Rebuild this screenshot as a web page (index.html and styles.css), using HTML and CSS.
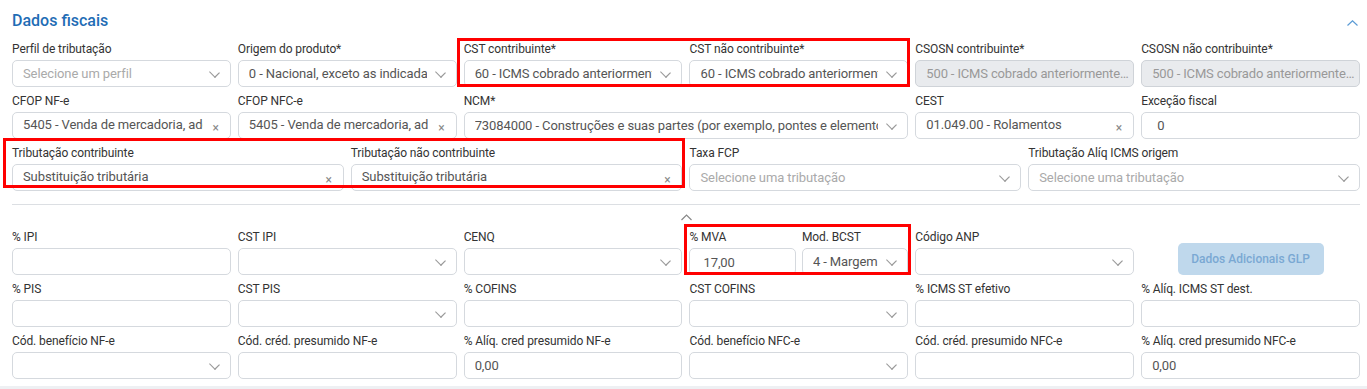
FILE: index.html
```html
<!DOCTYPE html>
<html lang="pt-BR">
<head>
    <meta charset="UTF-8">
    <title>Dados fiscais</title>
    <link rel="stylesheet" href="styles.css">
</head>
<body>

<div class="card">
    <div class="card-header">
        <h2 class="card-title">Dados fiscais</h2>
        <svg class="toggle" width="11" height="6" viewBox="0 0 11 6"><path d="M0.5 5.5 L5.5 0.8 L10.5 5.5" fill="none" stroke="#5b9bd5" stroke-width="1.2"/></svg>
    </div>

    <div class="grid">
        <div class="field span-2">
            <label>Perfil de tributação</label>
            <div class="control select"><span class="value placeholder">Selecione um perfil</span><i class="chev"></i></div>
        </div>
        <div class="field span-2">
            <label>Origem do produto*</label>
            <div class="control select"><span class="value">0 - Nacional, exceto as indicadas nos códigos 3, 4, 5 e 8</span><i class="chev"></i></div>
        </div>
        <div class="group group-cst span-4">
            <div class="field">
                <label>CST contribuinte*</label>
                <div class="control select"><span class="value">60 - ICMS cobrado anteriormente por substituição tributária</span><i class="chev"></i></div>
            </div>
            <div class="field">
                <label>CST não contribuinte*</label>
                <div class="control select"><span class="value">60 - ICMS cobrado anteriormente por substituição tributária</span><i class="chev"></i></div>
            </div>
        </div>
        <div class="field span-2">
            <label>CSOSN contribuinte*</label>
            <div class="control disabled"><span class="value ellipsis">500 - ICMS cobrado anteriormente por substituição</span></div>
        </div>
        <div class="field span-2">
            <label>CSOSN não contribuinte*</label>
            <div class="control disabled"><span class="value ellipsis">500 - ICMS cobrado anteriormente por substituição</span></div>
        </div>

        <div class="field span-2">
            <label>CFOP NF-e</label>
            <div class="control select"><span class="value raised">5405 - Venda de mercadoria, adquirida</span><i class="clear">×</i></div>
        </div>
        <div class="field span-2">
            <label>CFOP NFC-e</label>
            <div class="control select"><span class="value raised">5405 - Venda de mercadoria, adquirida</span><i class="clear">×</i></div>
        </div>
        <div class="field span-4">
            <label>NCM*</label>
            <div class="control select"><span class="value">73084000 - Construções e suas partes (por exemplo, pontes e elementos de pontes)</span><i class="chev"></i></div>
        </div>
        <div class="field span-2">
            <label>CEST</label>
            <div class="control select"><span class="value raised">01.049.00 - Rolamentos</span><i class="clear">×</i></div>
        </div>
        <div class="field span-2">
            <label>Exceção fiscal</label>
            <div class="control input wide-pad"><span class="value">0</span></div>
        </div>

        <div class="group group-trib span-6">
            <div class="field">
                <label>Tributação contribuinte</label>
                <div class="control select"><span class="value lifted">Substituição tributária</span><i class="clear">×</i></div>
            </div>
            <div class="field">
                <label>Tributação não contribuinte</label>
                <div class="control select"><span class="value lifted">Substituição tributária</span><i class="clear">×</i></div>
            </div>
        </div>
        <div class="field span-3">
            <label>Taxa FCP</label>
            <div class="control select"><span class="value placeholder">Selecione uma tributação</span><i class="chev"></i></div>
        </div>
        <div class="field span-3">
            <label>Tributação Alíq ICMS origem</label>
            <div class="control select"><span class="value placeholder">Selecione uma tributação</span><i class="chev"></i></div>
        </div>
    </div>

    <hr class="divider">
    <div class="collapse">
        <svg width="11" height="7" viewBox="0 0 11 7"><path d="M0.5 6 L5.5 1 L10.5 6" fill="none" stroke="#888" stroke-width="1.2"/></svg>
    </div>

    <div class="grid">
        <div class="field span-2">
            <label>% IPI</label>
            <div class="control input"><span class="value"></span></div>
        </div>
        <div class="field span-2">
            <label>CST IPI</label>
            <div class="control select"><span class="value"></span><i class="chev"></i></div>
        </div>
        <div class="field span-2">
            <label>CENQ</label>
            <div class="control select"><span class="value"></span><i class="chev"></i></div>
        </div>
        <div class="group group-mva span-2">
            <div class="field">
                <label>% MVA</label>
                <div class="control input"><span class="value mva">17,00</span></div>
            </div>
            <div class="field">
                <label>Mod. BCST</label>
                <div class="control select"><span class="value">4 - Margem Valor Agregado (%)</span><i class="chev"></i></div>
            </div>
        </div>
        <div class="field span-2">
            <label>Código ANP</label>
            <div class="control select"><span class="value"></span><i class="chev"></i></div>
        </div>
        <div class="field span-2 btn-cell">
            <button class="btn-glp" disabled>Dados Adicionais GLP</button>
        </div>

        <div class="field span-2">
            <label>% PIS</label>
            <div class="control input"><span class="value"></span></div>
        </div>
        <div class="field span-2">
            <label>CST PIS</label>
            <div class="control select"><span class="value"></span><i class="chev"></i></div>
        </div>
        <div class="field span-2">
            <label>% COFINS</label>
            <div class="control input"><span class="value"></span></div>
        </div>
        <div class="field span-2">
            <label>CST COFINS</label>
            <div class="control select"><span class="value"></span><i class="chev"></i></div>
        </div>
        <div class="field span-2">
            <label>% ICMS ST efetivo</label>
            <div class="control input"><span class="value"></span></div>
        </div>
        <div class="field span-2">
            <label>% Alíq. ICMS ST dest.</label>
            <div class="control input"><span class="value"></span></div>
        </div>

        <div class="field span-2">
            <label>Cód. benefício NF-e</label>
            <div class="control select"><span class="value"></span><i class="chev"></i></div>
        </div>
        <div class="field span-2">
            <label>Cód. créd. presumido NF-e</label>
            <div class="control input"><span class="value"></span></div>
        </div>
        <div class="field span-2">
            <label>% Alíq. cred presumido NF-e</label>
            <div class="control input"><span class="value">0,00</span></div>
        </div>
        <div class="field span-2">
            <label>Cód. benefício NFC-e</label>
            <div class="control select"><span class="value"></span><i class="chev"></i></div>
        </div>
        <div class="field span-2">
            <label>Cód. créd. presumido NFC-e</label>
            <div class="control input"><span class="value"></span></div>
        </div>
        <div class="field span-2">
            <label>% Alíq. cred presumido NFC-e</label>
            <div class="control input"><span class="value">0,00</span></div>
        </div>
    </div>
</div>

</body>
</html>
```

FILE: styles.css
```css
body {
    margin: 0;
    padding: 0;
    background-color: #eef0f3;
    font-family: Roboto, "Liberation Sans", sans-serif;
    color: #333;
}
.card {
    background-color: #fff;
    height: 386px;
    padding: 11px 7px 0 12px;
    box-sizing: border-box;
    overflow: hidden;
}
.card-header {
    display: flex;
    justify-content: space-between;
    align-items: center;
    height: 20px;
    margin-bottom: 10px;
}
.card-title {
    margin: 0;
    font-size: 16px;
    line-height: 20px;
    font-weight: 500;
    color: #1f6db5;
}
.toggle {
    margin-right: 2px;
    margin-top: 3px;
}
.grid {
    display: grid;
    grid-template-columns: repeat(12, 1fr);
    gap: 6px 7px;
}
.span-2 { grid-column: span 2; }
.span-3 { grid-column: span 3; }
.span-4 { grid-column: span 4; }
.span-6 { grid-column: span 6; }
.field {
    min-width: 0;
}
.field label {
    display: block;
    font-size: 12px;
    line-height: 16px;
    margin-bottom: 3px;
    white-space: nowrap;
    color: #333;
    letter-spacing: -0.1px;
}
.control {
    height: 27px;
    border: 1px solid #d5d9de;
    border-radius: 5px;
    box-sizing: border-box;
    display: flex;
    align-items: center;
    padding: 0 10px;
    font-size: 13px;
    letter-spacing: -0.1px;
    color: #555;
    background-color: #fff;
}
.control.wide-pad {
    padding-left: 15px;
}
.control .value {
    flex: 1;
    min-width: 0;
    overflow: hidden;
    white-space: nowrap;
}
.control .value.raised {
    margin-top: -3px;
}
.control .value.lifted {
    margin-top: -2px;
}
.control .value.mva {
    padding-left: 3px;
    margin-top: 2px;
}
.value.placeholder {
    color: #aaa;
}
.value.ellipsis {
    text-overflow: ellipsis;
}
.control.disabled {
    background-color: #e9ebee;
    border-color: #cfd3d8;
    color: #999;
    padding-right: 3px;
    letter-spacing: -0.15px;
}
.select .value {
    margin-right: 10px;
}
.chev {
    width: 6px;
    height: 6px;
    border-right: 1px solid #999;
    border-bottom: 1px solid #999;
    transform: rotate(45deg) scaleX(1.2);
    margin: 0 2px 2px 0;
    flex-shrink: 0;
}
.clear {
    font-style: normal;
    font-size: 12px;
    color: #888;
    margin: 4px 1px 0 0;
    flex-shrink: 0;
}
.group {
    position: relative;
    display: grid;
    grid-template-columns: 1fr 1fr;
    gap: 7px;
    min-width: 0;
}
.group::after {
    content: "";
    position: absolute;
    border: 3px solid #ff0000;
    pointer-events: none;
}
.group-cst::after {
    left: -7px;
    right: -2px;
    top: -3px;
    bottom: 0;
}
.group-trib::after {
    left: -9px;
    right: -3px;
    top: -7px;
    bottom: 3px;
}
.group-mva {
    gap: 6px;
}
.group-mva::after {
    left: -5px;
    right: -3px;
    top: -5px;
    bottom: 0;
}
.divider {
    border: none;
    border-top: 1px solid #dcdfe3;
    margin: 13px 0 0 0;
}
.collapse {
    height: 24px;
    display: flex;
    justify-content: center;
    align-items: center;
}
.btn-cell {
    display: flex;
    justify-content: center;
    align-items: flex-end;
}
.btn-glp {
    width: 146px;
    height: 32px;
    border: none;
    border-radius: 5px;
    background-color: #bfd8ec;
    color: #7aa8d3;
    font-family: Roboto, "Liberation Sans", sans-serif;
    font-size: 12px;
    font-weight: 500;
    margin-bottom: 0;
}
```
